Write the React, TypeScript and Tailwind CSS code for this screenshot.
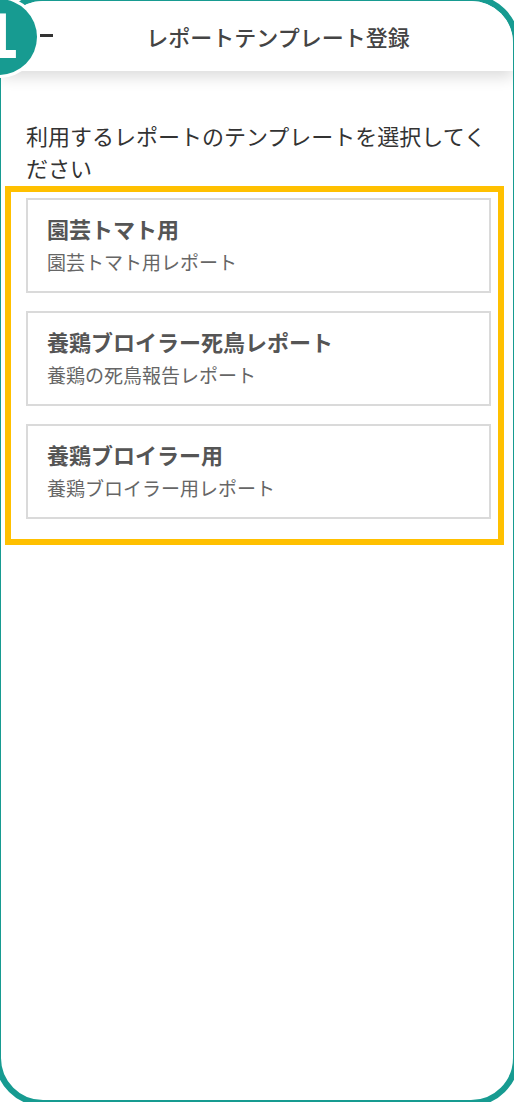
import React from "react";

const templates = [
  { title: "園芸トマト用", desc: "園芸トマト用レポート" },
  { title: "養鶏ブロイラー死鳥レポート", desc: "養鶏の死鳥報告レポート" },
  { title: "養鶏ブロイラー用", desc: "養鶏ブロイラー用レポート" },
];

const jp = { fontFamily: '"Noto Sans CJK JP", "Noto Sans", sans-serif' };

const TemplateCard = ({ title, desc }: { title: string; desc: string }) => (
  <div className="border-2 border-[#dadada] bg-white pl-[19px] pt-[13px] pb-[16px]">
    <div className="text-[22px] leading-[30px] font-bold text-[#555]">{title}</div>
    <div className="mt-[6px] text-[19px] leading-[26px] text-[#666]">{desc}</div>
  </div>
);

export default function App() {
  return (
    <div className="relative w-[514px] h-[1102px] overflow-hidden bg-white" style={jp}>
      {/* phone frame */}
      <div className="-ml-[5px] -mr-[5px] -mt-[5px] h-[1111px] border-[6px] border-[#179b91] rounded-[48px] overflow-hidden flex flex-col bg-white">
        <header className="relative z-10 h-[70px] shrink-0 flex items-center bg-white shadow-[0_6px_14px_rgba(0,0,0,0.14)]">
          <div className="absolute left-[39px] top-[33px] w-[13px] h-[3px] bg-[#333]" />
          <h1 className="w-full pl-[42px] text-center text-[22px] font-medium text-[#444]">
            レポートテンプレート登録
          </h1>
        </header>

        <main className="flex-1 pl-[25px] pr-[22px] pt-[48px]">
          <p className="text-[22px] leading-[32px] text-[#333]">
            利用するレポートのテンプレートを選択してください
          </p>

          <div className="relative mt-[15px] flex flex-col gap-[18px]">
            {templates.map((t) => (
              <TemplateCard key={t.title} title={t.title} desc={t.desc} />
            ))}
            <div className="pointer-events-none absolute -left-[21px] -right-[13px] -top-[12px] -bottom-[26px] border-[6px] border-[#ffc000]" />
          </div>
        </main>
      </div>

      {/* step badge */}
      <div className="absolute z-20 -left-[42px] -top-[4px] w-[82px] h-[82px] rounded-full bg-white flex items-center justify-center">
        <div
          className="w-[76px] h-[76px] rounded-full bg-[#179b91] flex items-center justify-center text-white text-[60px] font-bold leading-none"
          style={{ fontFamily: '"DejaVu Sans", sans-serif' }}
        >
          1
        </div>
      </div>
    </div>
  );
}
